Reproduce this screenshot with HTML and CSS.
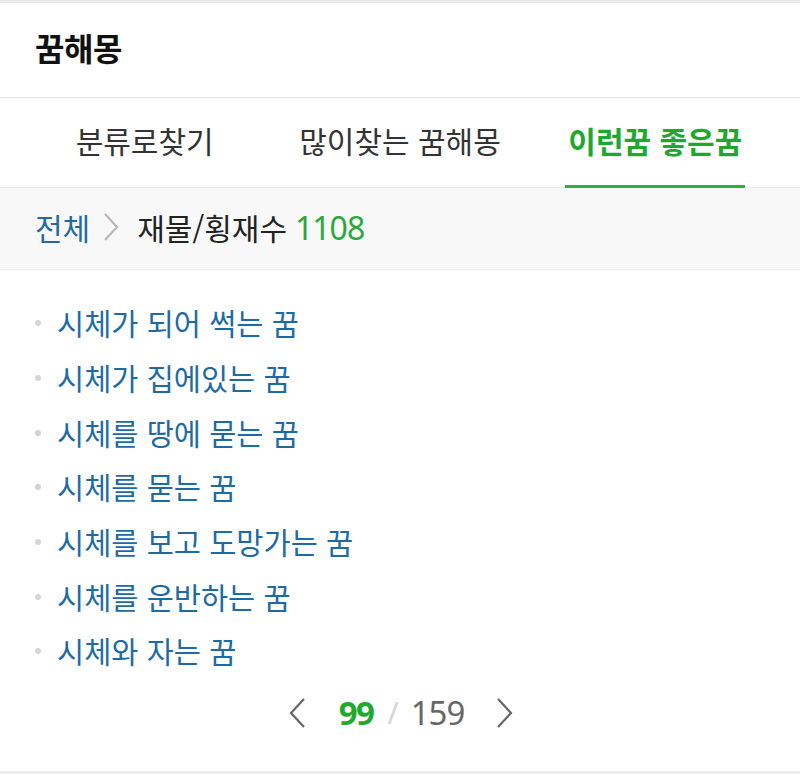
FILE: index.html
```html
<!DOCTYPE html>
<html lang="ko">
<head>
<meta charset="utf-8">
<link rel="stylesheet" href="styles.css">
</head>
<body>
<div class="topband"></div>
<header class="header"><h1 class="title">꿈해몽</h1></header>
<nav class="tabs">
  <div class="tab"><span class="tab-label">분류로찾기</span></div>
  <div class="tab"><span class="tab-label">많이찾는 꿈해몽</span></div>
  <div class="tab active"><span class="tab-label">이런꿈 좋은꿈</span></div>
</nav>
<div class="crumb">
  <span class="crumb-home">전체</span>
  <svg class="crumb-sep" width="16" height="30" viewBox="0 0 16 30"><path d="M2 2 L14 15 L2 28" fill="none" stroke="#b5b5b5" stroke-width="2"/></svg>
  <span class="crumb-cur">재물/횡재수</span>
  <span class="crumb-count">1108</span>
</div>
<ul class="list">
  <li class="item">시체가 되어 썩는 꿈</li>
  <li class="item">시체가 집에있는 꿈</li>
  <li class="item">시체를 땅에 묻는 꿈</li>
  <li class="item">시체를 묻는 꿈</li>
  <li class="item">시체를 보고 도망가는 꿈</li>
  <li class="item">시체를 운반하는 꿈</li>
  <li class="item">시체와 자는 꿈</li>
</ul>
<div class="pager">
  <svg class="pg-arrow" width="18" height="32" viewBox="0 0 18 32"><path d="M16 2 L3 16 L16 30" fill="none" stroke="#666" stroke-width="2.2"/></svg>
  <span class="pg-cur">99</span>
  <span class="pg-slash">/</span>
  <span class="pg-total">159</span>
  <svg class="pg-arrow" width="18" height="32" viewBox="0 0 18 32"><path d="M2 2 L15 16 L2 30" fill="none" stroke="#666" stroke-width="2.2"/></svg>
</div>
<div class="bottomline"></div>
</body>
</html>
```
FILE: styles.css
```css
* { box-sizing: border-box; }
html, body { margin: 0; padding: 0; background: #fff; }
body {
  width: 800px;
  height: 774px;
  overflow: hidden;
  font-family: "Noto Sans CJK KR", "Noto Sans", sans-serif;
  color: #333;
}
.topband { height: 3px; background: #e9e9ec; }
.header {
  height: 95px;
  border-bottom: 1px solid #e6e6e6;
  display: flex;
  align-items: center;
  padding-left: 35px;
}
.title {
  margin: 0;
  font-size: 32px;
  font-weight: 700;
  color: #111;
  letter-spacing: -0.5px;
  position: relative;
  top: -3px;
}
.tabs {
  height: 90px;
  display: flex;
  padding: 0 17px;
  border-bottom: 1px solid #ececec;
}
.tab {
  flex: 1;
  display: flex;
  justify-content: center;
  align-items: stretch;
}
.tab-label {
  display: flex;
  align-items: center;
  padding: 0 3px 4px;
  font-size: 30px;
  color: #333;
  border-bottom: 3px solid transparent;
  margin-bottom: -1px;
}
.tab.active .tab-label {
  color: #1fa82e;
  font-weight: 700;
  border-bottom-color: #2cb23a;
}
.crumb {
  height: 82px;
  background: #f8f8f9;
  border-bottom: 1px solid #efefef;
  display: flex;
  align-items: center;
  padding: 0 0 3px 35px;
  font-size: 30px;
}
.crumb-home { color: #1e6ba3; }
.crumb-sep { margin: 0 18px 0 13px; }
.crumb-cur { color: #222; }
.crumb-count { color: #2aa83a; margin-left: 8px; font-size: 32px; font-family: "Noto Sans", sans-serif; letter-spacing: -1px; }
.list {
  list-style: none;
  margin: 0;
  padding: 25px 0 0 0;
}
.item {
  height: 54.7px;
  display: flex;
  align-items: center;
  font-size: 29.5px;
  color: #1e6aa5;
  padding-left: 57px;
  position: relative;
}
.item::before {
  content: "";
  position: absolute;
  left: 35px;
  top: 50%;
  width: 6px;
  height: 6px;
  margin-top: -2px;
  border-radius: 50%;
  background: #d4d4d4;
}
.pager {
  height: 70px;
  display: flex;
  align-items: center;
  justify-content: center;
  padding-left: 2px;
  font-family: "Noto Sans", sans-serif;
}
.pg-arrow { display: block; }
.pg-cur {
  color: #21a92f;
  font-weight: 700;
  font-size: 33px;
  margin-left: 33px;
  letter-spacing: -1.5px;
}
.pg-slash {
  color: #d5d5d5;
  font-size: 30px;
  margin: 0 12px 0 14px;
}
.pg-total {
  color: #666;
  font-size: 33px;
  margin-right: 32px;
  letter-spacing: -1px;
}
.bottomline {
  margin-top: 23px;
  height: 3px;
  background: #ececef;
}
```
